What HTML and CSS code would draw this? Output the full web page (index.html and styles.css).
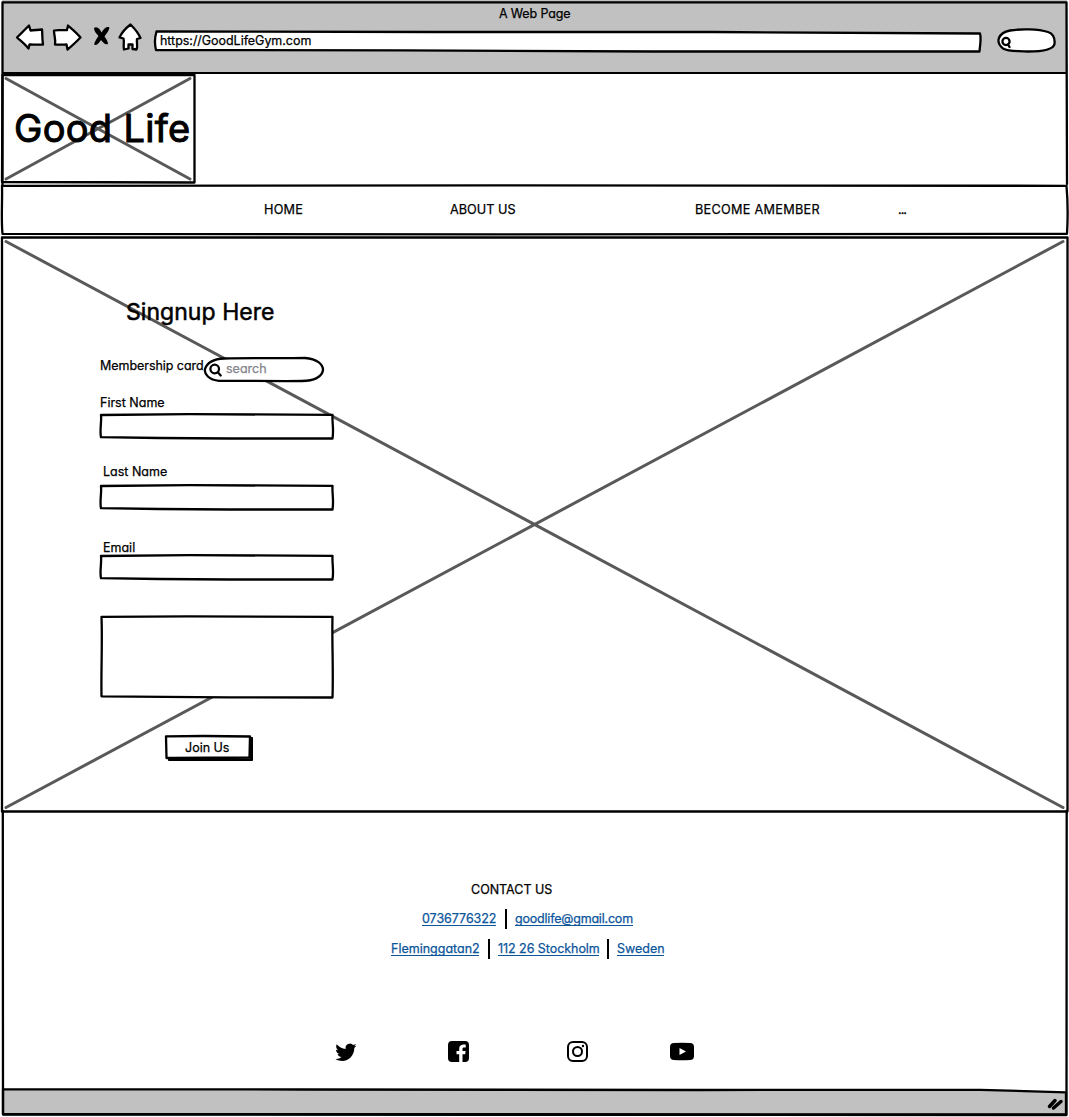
FILE: index.html
```html
<!DOCTYPE html>
<html lang="en">
<head>
<meta charset="utf-8">
<title>Good Life Gym</title>
<link rel="stylesheet" href="styles.css">
</head>
<body>
<div class="window">
  <header class="chrome">
    <div class="chrome-title"><span class="t-title">A Web Page</span></div>
    <div class="toolbar">
      <svg class="ico-back" width="30" height="28" viewBox="0 0 30 28"><path d="M2 14.500L14 2.500L15.500 7.500C19 7 23 7 27 6.500C27.500 11 27 15 28 21.500C24 22 19 21.500 14.500 21.500L13.500 25.500C10 21 6 18 2 14.500Z"/></svg>
      <svg class="ico-next" width="30" height="28" viewBox="0 0 30 28"><path d="M2 7.500C6 6.500 10 7.500 15 7L16 2.500C20 6 25 10 28.500 14.500C24 19 20 23 15.500 26.500L14.500 21.500C10 22 6 21.500 3 21.500C4 16 2 13 2 7.500Z"/></svg>
      <svg class="ico-stop" width="18" height="20" viewBox="0 0 18 20"><path d="M1 2C4 0 7 3 8.500 6.500C11 2 14 0 16.500 1.500C16 5 13 8 11.500 10.500C13 13 15 15 15 18C12 19.500 10 16 8 14C6 17 4 20 1 18.500C2 15 4 12 5.500 10C3.500 8 1 5 1 2Z"/></svg>
      <svg class="ico-home" width="24" height="28" viewBox="0 0 24 28"><path d="M12.500 1.500C16 5 20 9 22.500 15L19 16C18.500 20 20 24 18.500 26.500L14.500 26V21.500H10.500V25.500L6 26.500C5 23 6.500 19 5.500 15.500L1.500 14.500C3.500 10 8 5 12.500 1.500Z"/></svg>
      <div class="address">
        <svg class="frame" viewBox="0 0 829 23"><path d="M3.500 1.500L280 2L560 2L827 3.500C828.500 9 827 15 826.500 21.500L500 21.500L250 20.300L3 20C1.500 14 1.500 8 3.500 1.500Z"/></svg>
        <span class="t-url">https://GoodLifeGym.com</span>
      </div>
      <svg class="quick-search" width="61" height="27" viewBox="0 0 61 27"><path class="shape" d="M15 3.500C27 1.500 43 2 53 5C59 7 60 12 59.500 17C58 24 43 24.500 33 24.500C23 23.500 14 25 8 21.500C0 15 3 6 15 3.500Z"/><circle cx="11" cy="14.500" r="3.600"/><path d="M13 17.500L14.500 20"/></svg>
    </div>
  </header>

  <div class="brand-row">
    <div class="logo">
      <svg class="frame" viewBox="0 0 196 110" preserveAspectRatio="none"><path class="solid" d="M2.500 1H194.500V108.500L2 108Z"/><path class="cross" d="M6 4.500L190 105M190 4.500L6 105"/></svg>
      <span class="t-logo">Good Life</span>
    </div>
  </div>

  <nav class="nav">
    <svg class="frame" viewBox="0 0 1069 51" preserveAspectRatio="none"><path class="solid" d="M2 .8L500 .3L1066.500 .8C1068 18 1068 32 1067 48.800L500 49.300L2.500 48.800C1 34 2.500 16 2 .8Z"/></svg>
    <a class="n-home">HOME</a>
    <a class="n-about">ABOUT US</a>
    <a class="n-member">BECOME AMEMBER</a>
    <a class="n-more">...</a>
  </nav>

  <main class="hero">
    <svg class="frame" viewBox="0 0 1069 576" preserveAspectRatio="none"><path class="solid" d="M2 1.500H1067.500V575.500H2Z"/><path class="cross" d="M6 5.500L1063 571.500M1063 5.500L6 571.500"/></svg>
    <form class="form">
      <h1 class="t-signup">Singnup Here</h1>
      <div class="card-row">
        <label class="t-card">Membership card</label>
        <div class="pill">
          <svg class="frame" viewBox="0 0 121 26"><path d="M20 1.500C45 .5 80 1.500 101 1C113 2 119 7 119 13C118 20 110 24 98 24C70 24.200 40 23.800 15 23.800C5 23 0 17 1 12C3 6 9 2 20 1.500Z"/><circle cx="10.700" cy="12" r="4.300"/><path class="handle" d="M14 15.500L16.700 18.500"/></svg>
          <span class="t-search">search</span>
        </div>
      </div>
      <label class="t-first">First Name</label>
      <svg class="field" width="236" height="27" viewBox="0 0 236 27"><path d="M2 2L90 1.200L233.500 1.800C233 9 235 17 233.500 25.500L130 25.500L60 25L2 24.200C.5 17 2.800 9 2 2Z"/></svg>
      <label class="t-last">Last Name</label>
      <svg class="field" width="236" height="27" viewBox="0 0 236 27"><path d="M2 2L90 1.200L233.500 1.800C233 9 235 17 233.500 25.500L130 25.500L60 25L2 24.200C.5 17 2.800 9 2 2Z"/></svg>
      <label class="t-email">Email</label>
      <svg class="field" width="236" height="27" viewBox="0 0 236 27"><path d="M2 2L90 1.200L233.500 1.800C233 9 235 17 233.500 25.500L130 25.500L60 25L2 24.200C.5 17 2.800 9 2 2Z"/></svg>
      <svg class="area" width="236" height="84" viewBox="0 0 236 84"><path d="M2.500 1.800L90 1.300L233.500 1.800C232.800 25 234.500 55 233.500 82.500L130 82.300L2.500 81.300C2 55 3.500 28 2.500 1.800Z"/></svg>
      <div class="button">
        <svg class="frame" viewBox="0 0 90 29"><path class="shade" d="M86 3.500H88.500V26.500H4.500V25H86Z"/><path d="M2 2.300L40 2L86 2.500L85.500 23.500C60 24 30 23.500 2.500 24Z"/></svg>
        <span class="t-join">Join Us</span>
      </div>
    </form>
  </main>

  <footer class="footer">
    <div class="contact"><span class="t-contact">CONTACT US</span></div>
    <div class="links links-top"><a class="l-phone">0736776322</a><i class="sep"></i><a class="l-mail">goodlife@gmail.com</a></div>
    <div class="links links-address"><a class="l-street">Fleminggatan2</a><i class="sep"></i><a class="l-city">112 26 Stockholm</a><i class="sep"></i><a class="l-land">Sweden</a></div>
    <div class="social">
      <svg class="s-tw" width="22" height="18" viewBox="0 0 22 18"><path d="M21.500 2.600C20.800 3 20 3.200 19.100 3.300C20 2.700 20.600 1.900 20.900 0.900C20.100 1.400 19.200 1.700 18.200 1.900A4.400 4.400 0 0 0 10.700 5.900C7.100 5.700 3.900 4 1.700 1.300C0.700 3 1 5.700 3 7.200C2.300 7.200 1.600 7 1 6.700C1 8.900 2.500 10.600 4.500 11C3.900 11.200 3.200 11.200 2.500 11.100C3.100 12.900 4.700 14.100 6.600 14.100C4.800 15.500 2.600 16.100 0.500 15.900C9.800 21.500 19.400 14.500 19.300 4.900C20.200 4.300 20.900 3.500 21.500 2.600Z"/></svg>
      <svg class="s-fb" width="21" height="21" viewBox="0 0 21 21"><path d="M4 0H17Q21 0 21 4V17Q21 21 17 21H14.500V13.200H17.200L17.600 10H14.500V8C14.500 7 14.900 6.500 16 6.500H17.700V3.500C14 3 11.200 4 11.200 7.500V10H8.500V13.200H11.200V21H4Q0 21 0 17V4Q0 0 4 0Z"/></svg>
      <svg class="s-ig" width="21" height="21" viewBox="0 0 21 21"><rect x="1" y="1" width="19" height="19" rx="5"/><circle cx="10.500" cy="10.500" r="4.500"/><circle class="dot" cx="16" cy="5" r="1.200"/></svg>
      <svg class="s-yt" width="24" height="17" viewBox="0 0 24 17"><path d="M4 0Q12-.4 20 0Q24 0 24 4V13Q24 17 20 17Q12 17.400 4 17Q0 17 0 13V4Q0 0 4 0ZM9.500 5V12L16 8.500Z"/></svg>
    </div>
  </footer>

  <div class="status">
    <svg class="frame" viewBox="0 0 1069 29" preserveAspectRatio="none"><path d="M3 .3L300 .5L700 1L980 .8C1010 1.500 1040 2.800 1066 3.300V25.500L3 25Z"/><path class="grip" d="M1049.500 17.500L1055 11.500M1053.500 19L1061 12.500"/></svg>
  </div>
  <svg class="edges" viewBox="0 0 1069 1117"><path d="M2.500 73V2.300H1066.500L1067 184M2.500 73L2.500 186M2.800 811L3 1114.500L1066.500 1115L1066.700 811"/></svg>
</div>
</body>
</html>
```
FILE: styles.css
```css
* { box-sizing: border-box; margin: 0; padding: 0; }
body { background: #fff; }
.window {
  position: relative;
  width: 1069px;
  height: 1117px;
  overflow: hidden;
  background: #fff;
  color: #000;
  font: 12.5px/20px Inter, "Liberation Sans", sans-serif;
  font-feature-settings: "cv11" 1;
  -webkit-text-stroke: .25px currentColor;
  white-space: nowrap;
}
svg { display: block; flex: none; overflow: visible; fill: #fff; stroke: #000; stroke-width: 2.3px; stroke-linejoin: round; stroke-linecap: round; }
.frame, .edges { position: absolute; left: 0; top: 0; width: 100%; height: 100%; }
.edges { fill: none; pointer-events: none; }
.frame ~ * { position: relative; }
.cross { fill: none; stroke: #595959; stroke-width: 3px; }

.chrome { height: 74px; margin: 0 2px; padding-top: 4px; background: #c1c1c1; border-bottom: 2px solid #000; }
.chrome-title { height: 19px; padding-left: 497px; letter-spacing: -.15px; }
.toolbar { display: flex; align-items: flex-start; padding-left: 13px; }
.ico-back { margin-right: 7px; }
.ico-next { margin-right: 11px; }
.ico-stop { margin: 3px 7px 0 0; stroke: none; fill: #000; }
.ico-home { margin-right: 11px; }
.address { position: relative; width: 829px; height: 23px; margin: 7px 13px 0 0; padding-left: 7px; line-height: 22px; letter-spacing: -.04px; }
.quick-search { margin-top: 4px; }

.brand-row { height: 111px; }
.logo { position: relative; width: 196px; height: 110px; padding: 29px 0 0 14px; line-height: 50px; font-size: 38px; letter-spacing: .3px; -webkit-text-stroke-width: 1px; }

.nav { position: relative; display: flex; height: 51px; padding: 15px 0 0 264px; font-size: 12.7px; }
.n-home { width: 186px; letter-spacing: .2px; }
.n-about { width: 245px; }
.n-member { width: 203px; letter-spacing: .28px; }
.n-more { letter-spacing: -1px; }

.hero { position: relative; height: 576px; }
.form { display: flex; flex-direction: column; padding: 61px 0 0 99px; }
.form label { height: 20px; line-height: 22px; }
.t-signup { margin-left: 27px; font-size: 23px; line-height: 30px; font-weight: 400; letter-spacing: .05px; -webkit-text-stroke-width: .5px; }
.card-row { display: flex; height: 27px; margin: 28px 0 10px; padding-left: 1px; }
.t-card { width: 104px; letter-spacing: -.05px; }
.pill { position: relative; width: 121px; height: 26px; margin-top: 2px; padding: 2px 0 0 22px; color: #84848c; }
.handle { fill: none; }
.t-first { padding-left: 1px; margin-bottom: 1px; }
.t-last { padding-left: 4px; margin: 21px 0 3px; }
.t-email { padding-left: 4px; margin: 26px 0 -3px; z-index: 1; }
.area { margin-top: 34px; }
.button { position: relative; width: 90px; height: 29px; margin: 35px 0 0 65px; padding: 4px 0 0 21px; }
.shade { fill: #000; stroke-width: 1px; }

.footer { height: 278px; padding-top: 68px; }
.contact { padding-left: 471px; margin-bottom: 8px; }
.links { display: flex; height: 21px; margin-bottom: 9px; color: #0b559b; line-height: 22px; }
.links a { height: 18px; border-bottom: 1px solid #0b559b; }
.links-top { padding-left: 422px; }
.links-address { padding-left: 391px; }
.sep { width: 2px; height: 20px; margin: 1px 8px 0 9px; background: #000; }
.l-phone { width: 74px; letter-spacing: -.05px; }
.l-mail { width: 118px; letter-spacing: -.2px; }
.l-street { width: 88px; }
.l-city { width: 101px; letter-spacing: -.05px; }
.l-city + .sep { margin-left: 8px; }
.l-land { width: 47px; }
.social { display: flex; align-items: center; padding-left: 335px; margin-top: 82px; height: 21px; }
.social svg { fill: #000; stroke: none; fill-rule: evenodd; }
.s-tw { margin-right: 91px; }
.s-fb { margin-right: 98px; }
.social .s-ig { margin-right: 82px; fill: none; stroke: #000; stroke-width: 2px; }
.social .s-ig .dot { fill: #000; stroke: none; }

.status { position: relative; height: 27px; margin-top: -1px; }
.status .frame { height: 29px; fill: #c1c1c1; }
.grip { stroke-width: 3.5px; }
```
